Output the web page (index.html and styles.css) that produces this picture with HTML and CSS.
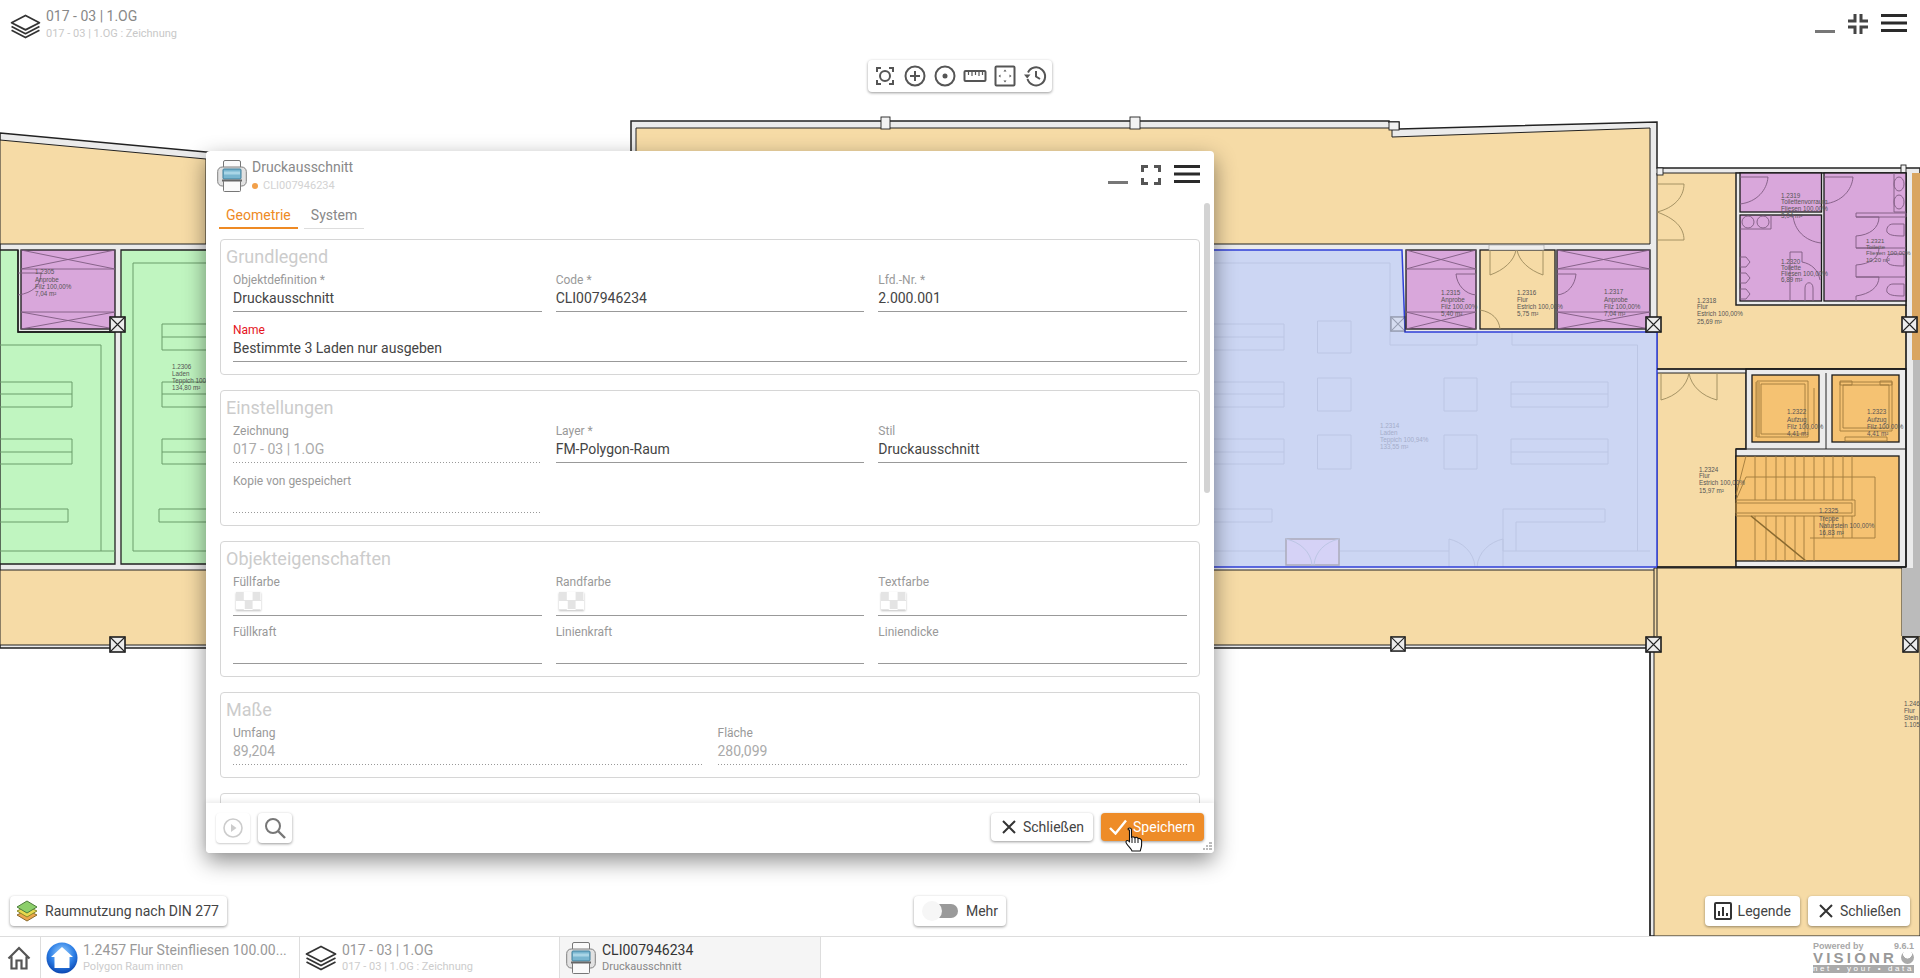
FILE: index.html
```html
<!DOCTYPE html>
<html lang="de">
<head>
    <meta charset="UTF-8">
    <meta name="viewport" content="width=device-width, initial-scale=1.0">
    <title>Druckausschnitt</title>
    <link rel="stylesheet" href="styles.css">
</head>
<body>

    <svg class="defs" width="0" height="0">
        <defs>
            <symbol id="pillar" viewBox="0 0 17 17">
                <rect x="1" y="1" width="15" height="15" fill="#ececec" stroke="#1c1c1c" stroke-width="1.6"/>
                <path d="M1 1 16 16M16 1 1 16" fill="none" stroke="#222" stroke-width="1.1"/>
            </symbol>
            <symbol id="layers" viewBox="0 0 32 26">
                <path d="M16 1.5 30.5 9 16 16.5 1.5 9Z" fill="#fff" stroke="#333" stroke-width="1.8" stroke-linejoin="round"/>
                <path d="M1.5 13 16 20.5 30.5 13M1.5 17 16 24.5 30.5 17" fill="none" stroke="#333" stroke-width="1.8" stroke-linejoin="round"/>
            </symbol>
            <symbol id="printer" viewBox="0 0 30 32">
                <rect x="6.5" y="0.5" width="17" height="11" rx="1.5" fill="#fafafa" stroke="#777"/>
                <rect x="0.7" y="7" width="28.6" height="19" rx="4.5" fill="#e2e2e2" stroke="#808080"/>
                <rect x="6" y="9" width="18" height="10" rx="1" fill="#79b6d0" stroke="#3f7f9b"/>
                <rect x="7" y="11.5" width="16" height="3" fill="#a9d5e6"/>
                <rect x="6.5" y="20.5" width="17" height="11" rx="1" fill="#fafafa" stroke="#777"/>
                <rect x="5" y="19.5" width="20" height="2" fill="#666"/>
            </symbol>
            <symbol id="cross" viewBox="0 0 16 16">
                <path d="M2 2 14 14M14 2 2 14" fill="none" stroke="#333" stroke-width="2"/>
            </symbol>
            <symbol id="min" viewBox="0 0 20 20">
                <rect y="16" width="20" height="3" fill="#777"/>
            </symbol>
            <symbol id="expand" viewBox="0 0 20 20">
                <path d="M1.5 7V1.5H7M13 1.5H18.5V7M18.5 13V18.5H13M7 18.5H1.5V13" fill="none" stroke="#555" stroke-width="3"/>
            </symbol>
            <symbol id="compress" viewBox="0 0 20 20">
                <path d="M7 0V7H0M13 0V7H20M20 13H13V20M7 20V13H0" fill="none" stroke="#444" stroke-width="3"/>
            </symbol>
            <symbol id="menu" viewBox="0 0 26 18">
                <path d="M0 1.5H26M0 9H26M0 16.5H26" fill="none" stroke="#2a2a2a" stroke-width="3"/>
            </symbol>
        </defs>
    </svg>

    <div class="viewer">

        <!-- floor plan, coordinates are the drawing itself -->
        <svg class="plan" width="1920" height="936" viewBox="0 0 1920 936">
            <path class="wall" d="M0 133 206 152H631V121H1389V122H1399V129L1657 122V168H1920V936H1650V648H0Z"/>

            <path class="beige" d="M0 140 206 159V244H0Z"/>
            <path class="beige" d="M636 128H1392V137L1650 128V244H636Z"/>
            <path class="beige" d="M0 570H1656V645H0Z"/>
            <path class="beige" d="M1657 173H1906V369H1657Z"/>
            <path class="beige" d="M1657 373H1746V449H1736V567H1657Z"/>
            <path class="beige" d="M1654 568H1902V636H1920V936H1654Z"/>
            <path class="brown" d="M1912 173H1920V360H1912Z"/>
            <path class="grey" d="M1913 360H1920V636H1902V568H1913Z"/>
            <path class="line" d="M1657 567V636"/>
            <path class="line" d="M1650 648V936"/>
            <g class="stub">
                <rect x="881" y="117" width="9" height="12"/>
                <rect x="1130" y="117" width="10" height="12"/>
                <rect x="1389" y="122" width="10" height="8"/>
                <rect x="1657" y="168" width="6" height="7"/>
                <rect x="1901" y="165" width="5" height="8"/>
            </g>

            <!-- left shops -->
            <path class="green" d="M0 250H18V332H115V564H0Z"/>
            <path class="green" d="M121 250H210V564H121Z"/>
            <g class="fix-green">
                <path d="M0 345H101V551M0 551H115M0 382H72V407H0M0 394H72M0 439H72V464H0M0 452H72M0 509H68V522H0"/>
                <path d="M210 263H133V551H210M210 324H162V350H210M162 337H210M210 382H162V407H210M162 394H210M210 439H162V464H210M162 452H210M210 509H159V522H210"/>
            </g>
            <rect class="purple" x="21" y="250" width="94" height="79"/>
            <path class="line2" d="M18 250V332H110"/>
            <g class="fix-purple">
                <path d="M21 269H115M21 312H115M21 250 115 269M21 269 115 250M21 312 115 329M21 329 115 312"/>
                <path d="M18 273H41C41 285 33 293 18 295"/>
            </g>

            <!-- selected shop -->
            <path class="blue" d="M206 250H1402L1405 332H1657V567H206Z"/>
            <g class="fix-blue">
                <path d="M206 263H1390V345H1477V332M1512 332V345H1637.5V551M206 551H1286M1340 551H1449M1503 551H1650"/>
                <path d="M206 324H1284V350H206M206 337H1284M206 382H1284V407H206M206 394H1284M206 439H1284V464H206M206 452H1284M206 509H1272V522H206"/>
                <path d="M1317.5 321H1351V353H1317.5ZM1317.5 378H1351V411H1317.5ZM1317.5 435H1351V469H1317.5ZM1444 378H1477V411H1444ZM1444 435H1477V469H1444Z"/>
                <path d="M1511 382H1608V407H1511ZM1511 394H1608M1511 439H1608V464H1511ZM1511 452H1608"/>
                <path d="M1503 551V509H1605V522H1516V551"/>
                <path class="door-fill" d="M1286 565V539H1339V565Z"/>
                <path d="M1286 539C1300 542 1311 552 1312 565M1339 539C1325 542 1315 552 1314 565"/>
                <path d="M1449 567V539C1462 542 1474 552 1475 567M1503 567V539C1490 542 1478 552 1477 567"/>
            </g>
            <path class="bline" d="M206 250H1402L1405 332H1657V567H206"/>

            <!-- rooms right of the shop -->
            <rect class="purple" x="1406" y="250" width="70" height="79"/>
            <rect class="beige2" x="1480" y="250" width="75" height="79"/>
            <rect class="purple" x="1557" y="250" width="93" height="79"/>
            <g class="fix-purple">
                <path d="M1406 269H1476M1406 312H1476M1406 250 1476 269M1406 269 1476 250M1406 312 1476 329M1406 329 1476 312"/>
                <path d="M1557 269H1650M1557 312H1650M1557 250 1650 269M1557 269 1650 250M1557 312 1650 329M1557 329 1650 312"/>
                <path d="M1456 274H1476V295C1465 294 1457 285 1456 274ZM1557 274H1576C1575 285 1568 294 1557 295"/>
            </g>
            <g class="fix-door">
                <path d="M1490 250V275C1504 270 1514 261 1516 250M1543 250V275C1529 270 1519 261 1517 250"/>
                <path d="M1480 310C1492 312 1499 319 1500 329"/>
                <path d="M1657 184H1684C1684 197 1674 208 1657 212M1657 240H1684C1684 227 1674 218 1657 212"/>
                <path d="M1661 373V400C1676 396 1687 386 1689 373M1717 373V400C1702 396 1691 386 1689 373"/>
            </g>
            <rect class="pale" x="1489" y="245" width="55" height="5"/>

            <!-- toilets -->
            <path class="wall" d="M1736 173H1906V305H1736Z"/>
            <rect class="purple" x="1740" y="173" width="81.5" height="39"/>
            <rect class="purple" x="1740" y="215" width="81.5" height="86"/>
            <rect class="purple" x="1824" y="173" width="82" height="128"/>
            <g class="fix-purple">
                <path d="M1740 177H1768C1767 190 1757 202 1740 204M1824 177H1853C1852 190 1842 202 1824 204"/>
                <path d="M1740 229H1771V215"/>
                <circle cx="1748" cy="222" r="6"/>
                <circle cx="1763" cy="222" r="6"/>
                <path d="M1793 215C1794 230 1805 241 1821 243"/>
                <path d="M1740 257H1746L1750 262 1746 267H1740ZM1740 273H1746L1750 278 1746 283H1740ZM1740 289H1746L1750 294 1746 299H1740Z"/>
                <path d="M1790 301V252H1802V262C1812 264 1818 270 1820 280"/>
                <path d="M1805 301V288C1805 281 1813 281 1813 288V301"/>
                <path d="M1894 173V212H1906"/>
                <ellipse cx="1899" cy="184" rx="5" ry="7"/>
                <ellipse cx="1899" cy="202" rx="5" ry="7"/>
                <path d="M1856 213H1906V217H1856ZM1856 236V248H1906M1856 265V277H1906M1856 296V301"/>
                <path d="M1856 217H1879C1879 228 1870 235 1856 236M1856 248H1879C1879 258 1870 264 1856 265M1856 277H1879C1879 287 1870 294 1856 296"/>
                <path d="M1904 224H1893C1888 224 1886 229 1887 232 1889 235 1893 236 1904 236ZM1904 254H1893C1888 254 1886 259 1887 262 1889 265 1893 266 1904 266ZM1904 284H1893C1888 284 1886 289 1887 292 1889 295 1893 296 1904 296Z"/>
            </g>

            <!-- lifts and stairs -->
            <path class="wall" d="M1746 369H1906V567H1736V449H1746Z"/>
            <path class="line" d="M1826 373V449M1736 449H1906"/>
            <rect class="orange" x="1752" y="375" width="67" height="67"/>
            <rect class="orange" x="1832" y="375" width="67" height="67"/>
            <rect class="orange" x="1736" y="456" width="163" height="105"/>
            <g class="fix-orange">
                <path d="M1757 381H1808V437H1757ZM1761 384H1805V434H1761ZM1756 382V437M1759 382V437"/>
                <path d="M1814 388V424"/>
                <path d="M1840 382H1892V431H1840ZM1843 385H1889V428H1843ZM1845 437H1887V441H1845Z"/>
                <path d="M1840 381H1852V385H1840ZM1880 381H1892V385H1880Z"/>
                <path d="M1746 477H1875V538H1810"/>
                <path d="M1736 500H1855V516H1736ZM1736 503H1852V513H1736Z"/>
                <path d="M1755 456V500M1766 456V500M1776 456V500M1785 456V500M1795 456V500M1804 456V500M1814 456V500M1824 456V500M1833 456V500M1843 456V500M1852 456V500"/>
                <path d="M1755 516V561M1766 516V561M1776 516V561M1785 516V561M1795 516V561M1804 516V561M1814 516V561M1824 516V538M1833 516V538M1843 516V538M1852 516V538"/>
                <path d="M1736 495 1746 456M1736 500 1746 477"/>
                <path class="thick" d="M1751 516 1806 561"/>
            </g>
            <path class="line2" d="M1657 369H1906M1657 567H1906M1906 305V567"/>

            <use href="#pillar" x="109" y="316" width="17" height="17"/>
            <use href="#pillar" x="109" y="636" width="17" height="17"/>
            <use href="#pillar" x="1390" y="316" width="16" height="16" class="faded"/>
            <use href="#pillar" x="1390" y="636" width="16" height="16"/>
            <use href="#pillar" x="1645" y="316" width="17" height="17"/>
            <use href="#pillar" x="1645" y="636" width="17" height="17"/>
            <use href="#pillar" x="1901" y="316" width="17" height="17"/>
            <use href="#pillar" x="1902" y="636" width="17" height="17"/>

            <text class="room" x="35" y="274"><tspan x="35">1.2305</tspan><tspan x="35" dy="7.5">Anprobe</tspan><tspan x="35" dy="7">Filz 100,00%</tspan><tspan x="35" dy="7">7,04 m²</tspan></text>
            <text class="room" x="172" y="369"><tspan x="172">1.2306</tspan><tspan x="172" dy="6.5">Laden</tspan><tspan x="172" dy="7.5">Teppich 100,94%</tspan><tspan x="172" dy="7">134,80 m²</tspan></text>
            <text class="room faint" x="1380" y="428"><tspan x="1380">1.2314</tspan><tspan x="1380" dy="7">Laden</tspan><tspan x="1380" dy="7">Teppich 100,94%</tspan><tspan x="1380" dy="7">133,55 m²</tspan></text>
            <text class="room" x="1441" y="295"><tspan x="1441">1.2315</tspan><tspan x="1441" dy="7">Anprobe</tspan><tspan x="1441" dy="7">Filz 100,00%</tspan><tspan x="1441" dy="7">5,40 m²</tspan></text>
            <text class="room" x="1517" y="295"><tspan x="1517">1.2316</tspan><tspan x="1517" dy="6.5">Flur</tspan><tspan x="1517" dy="7">Estrich 100,00%</tspan><tspan x="1517" dy="7">5,75 m²</tspan></text>
            <text class="room" x="1604" y="294"><tspan x="1604">1.2317</tspan><tspan x="1604" dy="8">Anprobe</tspan><tspan x="1604" dy="7">Filz 100,00%</tspan><tspan x="1604" dy="7">7,04 m²</tspan></text>
            <text class="room" x="1697" y="303"><tspan x="1697">1.2318</tspan><tspan x="1697" dy="6">Flur</tspan><tspan x="1697" dy="7">Estrich 100,00%</tspan><tspan x="1697" dy="8">25,69 m²</tspan></text>
            <text class="room" x="1781" y="198"><tspan x="1781">1.2319</tspan><tspan x="1781" dy="6">Toilettenvorraum</tspan><tspan x="1781" dy="7">Fliesen 100,00%</tspan><tspan x="1781" dy="6.5">3,04 m²</tspan></text>
            <text class="room" x="1781" y="264"><tspan x="1781">1.2320</tspan><tspan x="1781" dy="6">Toilette</tspan><tspan x="1781" dy="6">Fliesen 100,00%</tspan><tspan x="1781" dy="6">6,89 m²</tspan></text>
            <text class="room small" x="1866" y="243"><tspan x="1866">1.2321</tspan><tspan x="1866" dy="6">Toilette</tspan><tspan x="1866" dy="6">Fliesen 100,00%</tspan><tspan x="1866" dy="7">10,20 m²</tspan></text>
            <text class="room" x="1787" y="414"><tspan x="1787">1.2322</tspan><tspan x="1787" dy="8">Aufzug</tspan><tspan x="1787" dy="7">Filz 100,00%</tspan><tspan x="1787" dy="7">4,41 m²</tspan></text>
            <text class="room" x="1867" y="414"><tspan x="1867">1.2323</tspan><tspan x="1867" dy="8">Aufzug</tspan><tspan x="1867" dy="7">Filz 100,00%</tspan><tspan x="1867" dy="7">4,41 m²</tspan></text>
            <text class="room" x="1699" y="472"><tspan x="1699">1.2324</tspan><tspan x="1699" dy="6">Flur</tspan><tspan x="1699" dy="7">Estrich 100,00%</tspan><tspan x="1699" dy="8">15,97 m²</tspan></text>
            <text class="room" x="1819" y="513"><tspan x="1819">1.2325</tspan><tspan x="1819" dy="8">Treppe</tspan><tspan x="1819" dy="7">Naturstein 100,00%</tspan><tspan x="1819" dy="7">16,83 m²</tspan></text>
            <text class="room" x="1904" y="706"><tspan x="1904">1.246</tspan><tspan x="1904" dy="7">Flur</tspan><tspan x="1904" dy="7">Stein</tspan><tspan x="1904" dy="7">1.105</tspan></text>
        </svg>

        <div class="viewer-top">
            <div class="crumb">
                <svg class="crumb-icon" width="31" height="25"><use href="#layers"/></svg>
                <div class="names">
                    <div class="name">017 - 03 | 1.OG</div>
                    <div class="sub">017 - 03 | 1.OG : Zeichnung</div>
                </div>
            </div>
            <div class="ctrls ctrls-page">
                <svg width="20" height="20"><use href="#min"/></svg>
                <svg width="20" height="20"><use href="#compress"/></svg>
                <svg width="26" height="18"><use href="#menu"/></svg>
            </div>
        </div>

        <div class="toolbar">
            <svg viewBox="0 0 24 24" width="24" height="24"><path d="M4 8V4H8M16 4H20V8M20 16V20H16M8 20H4V16"/><circle cx="12" cy="12" r="5"/></svg>
            <svg viewBox="0 0 24 24" width="24" height="24"><circle cx="12" cy="12" r="9.5"/><path d="M12 7V17M7 12H17"/></svg>
            <svg viewBox="0 0 24 24" width="24" height="24"><circle cx="12" cy="12" r="9.5"/><circle class="solid" cx="12" cy="12" r="2.5"/></svg>
            <svg viewBox="0 0 24 24" width="24" height="24"><rect x="1.5" y="7" width="21" height="10" rx="1"/><path class="thin" d="M5.5 7V11M9 7V12M12.5 7V11M16 7V12M19.5 7V11"/></svg>
            <svg viewBox="0 0 24 24" width="24" height="24"><rect x="2.5" y="2.5" width="19" height="19" rx="1"/><path class="solid" d="M12 5.5 13.5 7.5H10.5ZM12 18.5 13.5 16.5H10.5ZM5.5 12 7.5 10.5V13.5ZM18.5 12 16.5 10.5V13.5Z"/></svg>
            <svg viewBox="0 0 24 24" width="24" height="24"><path d="M5 8.5A9 9 0 1 1 4.5 15"/><path d="M13 7V12.5L17 15"/><path class="solid" d="M1 10.5H7.5L4.2 14.5Z"/></svg>
        </div>

        <div class="viewer-foot">
            <div class="foot-left">
                <button class="btn">
                    <svg width="24" height="24" viewBox="0 0 24 24">
                        <path d="M12 11 22 16 12 22 2 16Z" fill="#eba64c" stroke="#8a6a2c"/>
                        <path d="M12 7 22 12 12 18 2 12Z" fill="#e7d94e" stroke="#8a8a2c"/>
                        <path d="M12 2 22 8 12 14 2 8Z" fill="#8ccf6b" stroke="#4d7d3c"/>
                    </svg>
                    Raumnutzung nach DIN 277
                </button>
            </div>
            <div class="btn mehr"><span class="toggle"></span>Mehr</div>
            <div class="foot-right">
                <button class="btn btn-legend">
                    <svg width="18" height="18" viewBox="0 0 18 18"><rect x="1" y="1" width="16" height="16" rx="1" fill="none" stroke="#333" stroke-width="2"/><path d="M5 14V9M9 14V5M13 14V11" fill="none" stroke="#333" stroke-width="2"/></svg>
                    Legende
                </button>
                <button class="btn btn-close">
                    <svg width="16" height="16"><use href="#cross"/></svg>
                    Schließen
                </button>
            </div>
        </div>

        <!-- dialog -->
        <div class="window">
            <div class="scroll-thumb"></div>

            <div class="win-head">
                <svg class="win-icon" width="30" height="32"><use href="#printer"/></svg>
                <div class="names">
                    <div class="name">Druckausschnitt</div>
                    <div class="sub"><span class="dot"></span>CLI007946234</div>
                </div>
                <div class="ctrls ctrls-win">
                    <svg width="20" height="20"><use href="#min"/></svg>
                    <svg width="20" height="20"><use href="#expand"/></svg>
                    <svg width="26" height="18"><use href="#menu"/></svg>
                </div>
            </div>

            <div class="tabs">
                <div class="tab active">Geometrie</div>
                <div class="tab">System</div>
            </div>

            <div class="win-body">
                <section class="group">
                    <h3>Grundlegend</h3>
                    <div class="grid">
                        <div class="field"><label>Objektdefinition *</label><div class="value">Druckausschnitt</div></div>
                        <div class="field"><label>Code *</label><div class="value">CLI007946234</div></div>
                        <div class="field"><label>Lfd.-Nr. *</label><div class="value">2.000.001</div></div>
                        <div class="field wide"><label class="req">Name</label><div class="value">Bestimmte 3 Laden nur ausgeben</div></div>
                    </div>
                </section>

                <section class="group">
                    <h3>Einstellungen</h3>
                    <div class="grid">
                        <div class="field"><label>Zeichnung</label><div class="value off">017 - 03 | 1.OG</div></div>
                        <div class="field"><label>Layer *</label><div class="value">FM-Polygon-Raum</div></div>
                        <div class="field"><label>Stil</label><div class="value">Druckausschnitt</div></div>
                        <div class="field"><label>Kopie von gespeichert</label><div class="value off"></div></div>
                    </div>
                </section>

                <section class="group">
                    <h3>Objekteigenschaften</h3>
                    <div class="grid">
                        <div class="field"><label>Füllfarbe</label><div class="value"><span class="swatch"></span></div></div>
                        <div class="field"><label>Randfarbe</label><div class="value"><span class="swatch"></span></div></div>
                        <div class="field"><label>Textfarbe</label><div class="value"><span class="swatch"></span></div></div>
                        <div class="field"><label>Füllkraft</label><div class="value"></div></div>
                        <div class="field"><label>Linienkraft</label><div class="value"></div></div>
                        <div class="field"><label>Liniendicke</label><div class="value"></div></div>
                    </div>
                </section>

                <section class="group">
                    <h3>Maße</h3>
                    <div class="grid grid-2">
                        <div class="field"><label>Umfang</label><div class="value off">89,204</div></div>
                        <div class="field"><label>Fläche</label><div class="value off">280,099</div></div>
                    </div>
                </section>

                <section class="group"></section>
            </div>

            <div class="win-foot">
                <button class="btn btn-icon disabled">
                    <svg width="24" height="24" viewBox="0 0 24 24"><circle cx="12" cy="12" r="9" fill="none" stroke="#ccc" stroke-width="1.6"/><path d="M10 8 15.5 12 10 16Z" fill="#ccc"/></svg>
                </button>
                <button class="btn btn-icon">
                    <svg width="24" height="24" viewBox="0 0 24 24"><circle cx="10" cy="10" r="7" fill="none" stroke="#777" stroke-width="2"/><path d="M15 15 22 22" stroke="#777" stroke-width="2.4"/></svg>
                </button>
                <button class="btn btn-close win-close">
                    <svg width="16" height="16"><use href="#cross"/></svg>
                    Schließen
                </button>
                <button class="btn btn-save">
                    <svg width="18" height="16" viewBox="0 0 18 16"><path d="M1 9 6.5 14.5 17 1.5" fill="none" stroke="#fff" stroke-width="2.4"/></svg>
                    Speichern
                </button>
                <svg class="grip" width="9" height="9" viewBox="0 0 9 9"><path d="M6 0H9V2H6ZM3 3H5V5H3ZM6 3H9V5H6ZM0 6H2V8H0ZM3 6H5V8H3ZM6 6H9V8H6Z" fill="#bbb"/></svg>
            </div>
        </div>

        <svg class="hand" width="18" height="25" viewBox="0 0 18 25">
            <path d="M4.5 1C5.7 1 6.5 1.8 6.5 3V10.5C7.2 9.6 9.3 9.5 9.8 10.9 10.6 10 12.6 10.1 13 11.6 14.2 11 16.6 11.6 16.6 14V18C16.6 20.5 15.500 22 15.3 24H7C6 21.5 3.8 20 1.5 16.5 .5 15 1 13.5 2.5 13.5 3.2 13.5 3.8 14 4.5 15V3C2.5 3 2.5 1 4.5 1Z" fill="#fff" stroke="#111" stroke-width="1.1" stroke-linejoin="round"/>
            <path d="M7 11V16M10 11V16M13 12V16" fill="none" stroke="#111"/>
        </svg>
    </div>

    <div class="taskbar">
        <div class="home">
            <svg width="24" height="24" viewBox="0 0 24 24"><path d="M1.5 12.500 12 2 22.5 12.500M4.5 10.500V22.500H9.500V14.500H14.500V22.500H19.500V10.500" fill="none" stroke="#555" stroke-width="2.2"/></svg>
        </div>
        <div class="task">
            <svg class="task-icon" width="32" height="32" viewBox="0 0 32 32">
                <defs>
                    <radialGradient id="ball" cx="50%" cy="35%" r="65%">
                        <stop offset="0" stop-color="#9fd4ff"/>
                        <stop offset=".6" stop-color="#2d7fe6"/>
                        <stop offset="1" stop-color="#0b46b0"/>
                    </radialGradient>
                </defs>
                <circle cx="16" cy="16" r="15.5" fill="url(#ball)"/>
                <path d="M16 5 27 15H23.5V26H8.5V15H5Z" fill="#fff"/>
            </svg>
            <div class="names">
                <div class="name">1.2457 Flur Steinfliesen 100.00...</div>
                <div class="sub">Polygon Raum innen</div>
            </div>
        </div>
        <div class="task second">
            <svg class="task-icon" width="32" height="26"><use href="#layers"/></svg>
            <div class="names">
                <div class="name">017 - 03 | 1.OG</div>
                <div class="sub">017 - 03 | 1.OG : Zeichnung</div>
            </div>
        </div>
        <div class="task current">
            <svg class="task-icon" width="30" height="32"><use href="#printer"/></svg>
            <div class="names">
                <div class="name">CLI007946234</div>
                <div class="sub">Druckausschnitt</div>
            </div>
        </div>

        <div class="logo">
            <div class="logo-top"><span>Powered by</span><span>9.6.1</span></div>
            <div class="logo-name">VISIONR<span class="logo-ball"></span></div>
            <div class="logo-band">net • your • data</div>
        </div>
    </div>

</body>
</html>
```

FILE: styles.css
```css
* {
    box-sizing: border-box;
}
body {
    margin: 0;
    height: 978px;
    overflow: hidden;
    display: flex;
    flex-direction: column;
    background: white;
    font-family: Roboto, "Liberation Sans", sans-serif;
    font-size: 14px;
    color: #444;
}
.defs {
    position: absolute;
}
.viewer {
    position: relative;
    flex: 1;
    overflow: hidden;
}
.plan {
    position: absolute;
    left: 0;
    top: 0;
}

/* plan fills */
.wall { fill: #ebebeb; stroke: #222; stroke-width: 1.5; }
.beige { fill: #f6dba6; stroke: #222; stroke-width: 1; }
.beige2 { fill: #f6dba6; stroke: #1a1a1a; stroke-width: 1.3; }
.brown { fill: #d9a560; }
.grey { fill: #bbb; }
.green { fill: #c0f5c0; stroke: #222; stroke-width: 1.3; }
.purple { fill: #d9a7db; stroke: #1a1a1a; stroke-width: 1.3; }
.orange { fill: #f5c272; stroke: #1a1a1a; stroke-width: 1.3; }
.blue { fill: #ccd6f3; }
.pale { fill: #eee; stroke: #999; stroke-width: .6; }
.stub rect { fill: #f2f2f2; stroke: #222; stroke-width: .9; }
.line { fill: none; stroke: #222; stroke-width: 1; }
.line2 { fill: none; stroke: #1a1a1a; stroke-width: 1.3; }
.bline { fill: none; stroke: #2f3fd8; stroke-width: 1.5; }
.fix-green path { fill: none; stroke: #6b9d6b; stroke-width: 1; }
.fix-blue path { fill: none; stroke: #bcc6e4; stroke-width: 1; }
.fix-blue .door-fill { fill: #d5d2f6; stroke: #aab; stroke-width: 1.5; }
.fix-purple path, .fix-purple circle, .fix-purple ellipse { fill: none; stroke: #7e5b80; stroke-width: .9; }
.fix-door path { fill: none; stroke: #9c8a5c; stroke-width: .9; }
.fix-orange path { fill: none; stroke: #a07a3c; stroke-width: .9; }
.fix-orange .thick { stroke: #8a6a30; stroke-width: 1.6; }
.faded { opacity: .3; }
.room {
    font-family: "Liberation Sans", Arial, sans-serif;
    font-size: 6.3px;
    fill: #555;
}
.small {
    font-size: 6px;
}
.faint {
    fill: #a4adca;
}

/* page header */
.viewer-top {
    position: absolute;
    left: 10px;
    right: 13px;
    top: 0;
    display: flex;
    justify-content: space-between;
}
.crumb {
    display: flex;
    align-items: flex-start;
    padding-top: 8px;
}
.crumb-icon {
    margin: 6px 5px 0 0;
}
.names {
    min-width: 0;
}
.name {
    font-size: 14px;
    line-height: 17px;
    color: #888;
    white-space: nowrap;
}
.sub {
    font-size: 11px;
    line-height: 16px;
    margin-top: 1px;
    color: #c8c8c8;
    white-space: nowrap;
}
.ctrls {
    display: flex;
    align-items: flex-start;
}
.ctrls-page {
    gap: 13px;
    padding-top: 14px;
}
.ctrls-win {
    margin-left: auto;
    gap: 13px;
}

.toolbar {
    position: absolute;
    left: 868px;
    top: 60px;
    width: 184px;
    height: 32px;
    display: flex;
    align-items: center;
    justify-content: center;
    gap: 6px;
    background: white;
    border-radius: 4px;
    box-shadow: 0 1px 3px rgba(0,0,0,.4);
}
.toolbar svg {
    fill: none;
    stroke: #555;
    stroke-width: 2;
}
.toolbar .thin {
    stroke-width: 1.2;
}
.toolbar .solid {
    fill: #555;
    stroke: none;
}

/* buttons */
.btn {
    display: inline-flex;
    align-items: center;
    height: 30px;
    padding: 0 8px;
    border: none;
    border-radius: 4px;
    background: white;
    font: inherit;
    color: #444;
    white-space: nowrap;
    box-shadow: 0 1px 3px rgba(0,0,0,.4);
}
.viewer-foot {
    position: absolute;
    left: 10px;
    right: 10px;
    bottom: 10px;
    display: grid;
    grid-template-columns: 1fr auto 1fr;
}
.foot-left {
    display: flex;
}
.foot-left .btn {
    padding: 0 8px 0 5px;
    gap: 6px;
}
.foot-right {
    display: flex;
    justify-content: flex-end;
    gap: 8px;
}
.btn-legend {
    gap: 6px;
    padding: 0 9px;
}
.btn-close {
    gap: 6px;
    padding: 0 9px 0 10px;
}
.mehr {
    padding: 0 8px;
    gap: 8px;
}
.toggle {
    position: relative;
    width: 36px;
    height: 20px;
}
.toggle::before {
    content: "";
    position: absolute;
    left: 10px;
    right: 0;
    top: 3px;
    height: 14px;
    border-radius: 7px;
    background: #9a9a9a;
}
.toggle::after {
    content: "";
    position: absolute;
    left: 0;
    top: 0;
    width: 20px;
    height: 20px;
    border-radius: 50%;
    background: #f6f6f6;
}

/* dialog */
.window {
    position: absolute;
    left: 206px;
    top: 151px;
    width: 1008px;
    height: 702px;
    display: flex;
    flex-direction: column;
    background: white;
    border-radius: 4px;
    box-shadow: 0 8px 22px rgba(0,0,0,.45);
}
.win-head {
    height: 54px;
    flex: none;
    display: flex;
    align-items: flex-start;
    padding: 9px 14px 0 11px;
}
.win-head .names {
    margin-left: 5px;
    margin-top: -1px;
}
.win-head .sub {
    display: flex;
    align-items: center;
    margin-top: 2px;
    color: #d2d2d2;
}
.win-head .ctrls {
    padding-top: 5px;
}
.dot {
    width: 6px;
    height: 6px;
    margin: 0 5px 0 0;
    border-radius: 50%;
    background: #f2a04a;
}
.tabs {
    display: flex;
    flex: none;
    gap: 6px;
    height: 24px;
    padding-left: 13px;
}
.tab {
    padding: 0 7px;
    line-height: 21px;
    font-size: 14px;
    color: #888;
    border-bottom: 1px solid #ddd;
}
.tab.active {
    color: #ee8a24;
    border-bottom: 2px solid #ee8a24;
}
.win-body {
    flex: 1;
    overflow: hidden;
    padding: 10px 14px 0;
}
.scroll-thumb {
    position: absolute;
    right: 4px;
    top: 52px;
    width: 6px;
    height: 290px;
    border-radius: 3px;
    background: #d3d3d3;
}
.group {
    height: 136px;
    margin-bottom: 15px;
    padding: 0 12px;
    border: 1px solid #d6d6d6;
    border-radius: 4px;
}
.group:nth-of-type(4) {
    height: 86px;
}
.group h3 {
    margin: 0 0 0 -7px;
    height: 32px;
    padding-top: 4px;
    font-size: 18px;
    line-height: 26px;
    font-weight: normal;
    color: #ccc;
}
.grid {
    display: grid;
    grid-template-columns: repeat(3, 1fr);
    column-gap: 14px;
}
.grid-2 {
    grid-template-columns: repeat(2, 1fr);
    column-gap: 15px;
}
.wide {
    grid-column: 1 / -1;
}
.field {
    height: 50px;
}
.field label {
    display: block;
    height: 16px;
    font-size: 12px;
    line-height: 16px;
    color: #999;
}
.field label.req {
    color: #e5141c;
}
.value {
    height: 24px;
    line-height: 20px;
    font-size: 14px;
    color: #444;
    border-bottom: 1px solid #999;
}
.value.off {
    color: #aaa;
    border-bottom: none;
    background: linear-gradient(to right, #999 1px, transparent 1px) left bottom / 3px 1px repeat-x;
}
.swatch {
    display: block;
    width: 25px;
    height: 18px;
    margin: 2px 0 0 3px;
    background: conic-gradient(#fff 25%, #e4e4e4 0 50%, #fff 0 75%, #e4e4e4 0) 0 0 / 16.6px 17px;
    box-shadow: 0 1px 2px rgba(0,0,0,.25);
}
.win-foot {
    position: relative;
    height: 50px;
    flex: none;
    display: flex;
    align-items: flex-start;
    gap: 8px;
    padding: 10px;
    background: white;
    border-radius: 0 0 4px 4px;
    box-shadow: 0 -2px 5px rgba(0,0,0,.08);
}
.win-foot .btn-close, .btn-save {
    height: 28px;
}
.win-close {
    margin-left: auto;
}
.btn-icon {
    width: 34px;
    justify-content: center;
    padding: 0;
}
.btn-icon.disabled {
    box-shadow: 0 1px 2px rgba(0,0,0,.2);
}
.btn-save {
    gap: 6px;
    padding: 0 9px 0 8px;
    background: #ee8c28;
    color: white;
}
.grip {
    position: absolute;
    right: 2px;
    bottom: 2px;
}
.hand {
    position: absolute;
    left: 1125px;
    top: 827px;
}

/* bottom bar */
.taskbar {
    display: flex;
    flex: none;
    height: 42px;
    border-top: 1px solid #ddd;
    background: white;
}
.home {
    width: 41px;
    flex: none;
    display: flex;
    align-items: center;
    justify-content: center;
    padding-right: 3px;
    border-right: 1px solid #ddd;
}
.task {
    width: 259px;
    flex: none;
    display: flex;
    align-items: center;
    gap: 5px;
    padding: 0 4px 0 5px;
    border-right: 1px solid #ddd;
}
.task.second {
    width: 260px;
}
.task .names {
    padding-top: 2px;
}
.task .name {
    color: #999;
}
.task .sub {
    margin-top: 0;
    color: #ccc;
}
.task-icon {
    flex: none;
}
.task.current {
    width: 261px;
    gap: 6px;
    padding-left: 6px;
    background: #f5f5f5;
}
.task.current .name {
    color: #333;
}
.task.current .sub {
    color: #888;
}
.logo {
    width: 101px;
    margin: 4px 6px 0 auto;
    color: #a8a8a8;
    font-family: "Liberation Sans", Arial, sans-serif;
}
.logo-top {
    display: flex;
    justify-content: space-between;
    font-size: 9px;
    line-height: 10px;
    font-weight: bold;
}
.logo-name {
    display: flex;
    align-items: center;
    justify-content: space-between;
    font-size: 15px;
    line-height: 13px;
    font-weight: bold;
    letter-spacing: 3.2px;
    color: #999;
}
.logo-ball {
    width: 13px;
    height: 13px;
    border-radius: 50%;
    background: radial-gradient(circle at 50% 25%, #fff 0 35%, #aaa 38%);
}
.logo-band {
    height: 8px;
    margin-top: 1px;
    background: #aaa;
    color: white;
    font-size: 8px;
    line-height: 8px;
    letter-spacing: 2.6px;
    text-align: center;
    white-space: nowrap;
    overflow: hidden;
}
```
